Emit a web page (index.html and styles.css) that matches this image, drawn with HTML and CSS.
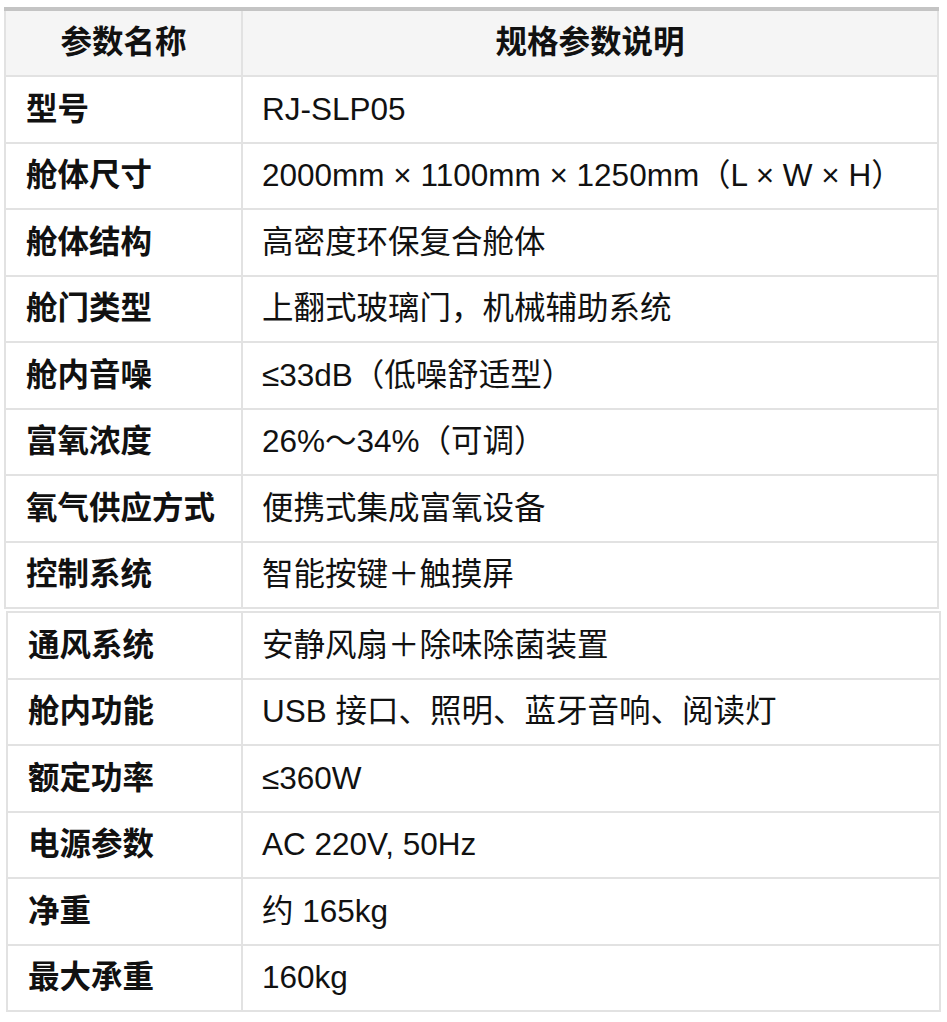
FILE: index.html
```html
<!DOCTYPE html>
<html lang="zh-CN">
<head>
<meta charset="utf-8">
<title>规格参数</title>
<link rel="stylesheet" href="styles.css">
</head>
<body>
<div class="page">
  <table class="spec spec-a">
    <colgroup><col class="c-name"><col class="c-val"></colgroup>
    <thead>
      <tr><th>参数名称</th><th>规格参数说明</th></tr>
    </thead>
    <tbody>
      <tr><td>型号</td><td>RJ-SLP05</td></tr>
      <tr><td>舱体尺寸</td><td>2000mm × 1100mm × 1250mm（L × W × H）</td></tr>
      <tr><td>舱体结构</td><td>高密度环保复合舱体</td></tr>
      <tr><td>舱门类型</td><td>上翻式玻璃门，机械辅助系统</td></tr>
      <tr><td>舱内音噪</td><td>≤33dB（低噪舒适型）</td></tr>
      <tr><td>富氧浓度</td><td>26%～34%（可调）</td></tr>
      <tr><td>氧气供应方式</td><td>便携式集成富氧设备</td></tr>
      <tr><td>控制系统</td><td>智能按键＋触摸屏</td></tr>
    </tbody>
  </table>
  <table class="spec spec-b">
    <colgroup><col class="c-name"><col class="c-val"></colgroup>
    <tbody>
      <tr><td>通风系统</td><td>安静风扇＋除味除菌装置</td></tr>
      <tr><td>舱内功能</td><td>USB 接口、照明、蓝牙音响、阅读灯</td></tr>
      <tr><td>额定功率</td><td>≤360W</td></tr>
      <tr><td>电源参数</td><td>AC 220V, 50Hz</td></tr>
      <tr><td>净重</td><td>约 165kg</td></tr>
      <tr><td>最大承重</td><td>160kg</td></tr>
    </tbody>
  </table>
</div>
</body>
</html>
```

FILE: styles.css
```css
html, body {
  margin: 0;
  padding: 0;
  background: #ffffff;
}

.page {
  padding-top: 7px;
  font-family: "Liberation Sans", "Noto Sans CJK SC", sans-serif;
  color: #111111;
}

.spec {
  border-collapse: collapse;
  table-layout: fixed;
  width: 935px;
  font-size: 31.5px;
}

.spec-a {
  margin-left: 4px;
  border-top: 4px solid #c4c4c4;
}

.spec-b {
  margin-left: 6px;
  margin-top: 2px;
}

.c-name {
  width: 237px;
}

.spec-b .c-name {
  width: 235px;
}

.spec th,
.spec td {
  border: 2px solid #e2e2e2;
  padding: 0 19px;
  height: 64.5px;
  line-height: 1;
  vertical-align: middle;
  text-align: left;
  white-space: nowrap;
}

.spec thead th {
  background: #f5f5f5;
  text-align: center;
  font-weight: bold;
  height: 64px;
}

.spec td:first-child {
  font-weight: bold;
  padding-left: 20px;
}
```
